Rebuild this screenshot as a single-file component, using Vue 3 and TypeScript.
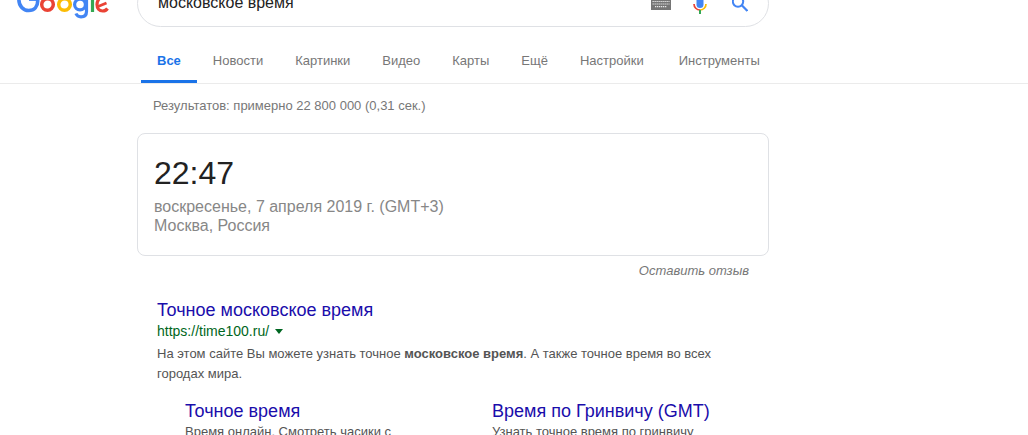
<script setup lang="ts">
const tabs: string[] = ['Новости', 'Картинки', 'Видео', 'Карты', 'Ещё']
const sitelinks = [
  { title: 'Точное время', text: 'Время онлайн. Смотреть часики с' },
  { title: 'Время по Гринвичу (GMT)', text: 'Узнать точное время по гринвичу' },
]
</script>

<template>
  <div class="page">
    <header class="head">
      <svg class="logo" width="92" height="20" viewBox="0 0 92 20" fill="none">
        <path d="M1.900 -2v2a9.800 10.500 0 0 0 9.800 10.500c5.800 0 9-4 9-9.500v-1" stroke="#4285f4" stroke-width="3.600" />
        <path d="M12 -.6h8" stroke="#4285f4" stroke-width="3" />
        <circle cx="30.500" cy="4.500" r="5.800" stroke="#ea4335" stroke-width="3.500" />
        <circle cx="47.500" cy="4.500" r="5.800" stroke="#fbbc05" stroke-width="3.500" />
        <circle cx="63" cy="4.500" r="5.400" stroke="#4285f4" stroke-width="3.200" />
        <path d="M69.500 -4V11.500c0 4-2.500 5.300-5.500 5.300-2.500 0-4.300-1.400-5.100-3.300" stroke="#4285f4" stroke-width="3.200" />
        <path d="M75.500 -4V12" stroke="#34a853" stroke-width="3.200" />
        <path d="M90.500 8.500c-1.200 1.700-3 2.500-4.800 2.500-3.500 0-5.700-2.800-5.700-6.500 0-4 2.500-7 5.500-7" stroke="#ea4335" stroke-width="3.200" />
        <path d="M80.500 6.800l9-3.800" stroke="#ea4335" stroke-width="2.800" />
      </svg>
      <div class="search">
        <span class="query">московское время</span>
        <svg class="kbd" width="20" height="12" viewBox="0 0 20 12">
          <rect width="20" height="12" fill="#757575" />
          <path d="M1.500 3.500h17M1.500 6h17M4 8.700h12" stroke="#e8e8e8" stroke-width="1.200" stroke-dasharray="1.300 .7" />
        </svg>
        <svg class="mic" width="14" height="16" viewBox="0 0 14 16" fill="none">
          <path d="M3.500 0h7v6.500a3.500 3.500 0 0 1-7 0z" fill="#4285f4" />
          <path d="M1 6a6 6 0 0 0 6 6" stroke="#ea4335" stroke-width="1.700" />
          <path d="M13 6a6 6 0 0 1-6 6" stroke="#fbbc05" stroke-width="1.700" />
          <path d="M7 12v4" stroke="#34a853" stroke-width="2" />
        </svg>
        <svg class="lens" width="16" height="16" viewBox="0 0 16 16" fill="none">
          <circle cx="6" cy="5.500" r="5.200" stroke="#4285f4" stroke-width="2" />
          <path d="M9.800 9.300l5.600 5.600" stroke="#4285f4" stroke-width="2.200" />
        </svg>
      </div>
    </header>

    <nav class="tabs">
      <a class="tab active">Все</a>
      <a v-for="t in tabs" :key="t" class="tab">{{ t }}</a>
      <a class="tab">Настройки</a>
      <a class="tab tab-tools">Инструменты</a>
    </nav>

    <main class="main">
      <div class="stats">Результатов: примерно 22 800 000 (0,31 сек.)</div>

      <section class="card">
        <div class="clock">22:47</div>
        <div class="info">воскресенье, 7 апреля 2019 г. (GMT+3)</div>
        <div class="info">Москва, Россия</div>
      </section>
      <div class="feedback">Оставить отзыв</div>

      <article class="result">
        <h3 class="title">Точное московское время</h3>
        <div class="url">https://time100.ru/<i class="caret"></i></div>
        <p class="snippet">На этом сайте Вы можете узнать точное <b>московское время</b>. А также точное время во всех городах мира.</p>
        <div class="links">
          <div v-for="l in sitelinks" :key="l.title" class="link">
            <h3 class="title">{{ l.title }}</h3>
            <div class="sub">{{ l.text }}</div>
          </div>
        </div>
      </article>
    </main>
  </div>
</template>

<style>
html, body { background: #fff; overflow: hidden; }
</style>

<style scoped>
.page {
  width: 1028px;
  height: 435px;
  overflow: hidden;
  background: #fff;
  font-family: "Liberation Sans", Arial, sans-serif;
}
.head {
  display: flex;
  align-items: flex-start;
  height: 27px;
  padding-left: 17px;
}
.logo { flex: none; }
.search {
  flex: none;
  box-sizing: border-box;
  width: 632px;
  height: 47px;
  margin: -20px 0 0 28px;
  padding: 0 20px 0 20px;
  display: flex;
  align-items: flex-end;
  border: 1px solid #dfe1e5;
  border-radius: 24px;
  background: #fff;
}
.query { flex: 1; font-size: 16px; line-height: 20px; margin-bottom: 13px; color: #222; }
.kbd { flex: none; margin-bottom: 16px; }
.mic { flex: none; margin: 0 0 12px 22px; }
.lens { flex: none; margin: 0 0 14px 25px; }

.tabs {
  display: flex;
  height: 57px;
  box-sizing: border-box;
  padding-left: 141px;
  border-bottom: 1px solid #ebebeb;
  font-size: 13px;
}
.tab {
  box-sizing: border-box;
  height: 56px;
  padding: 26px 16px 0;
  color: #777;
  white-space: nowrap;
}
.active {
  color: #1a73e8;
  font-weight: 700;
  border-bottom: 3px solid #1a73e8;
}
.tab-tools { margin-left: 3px; }

.main { padding-left: 137px; width: 632px; }
.stats {
  margin: 14px 0 0 16px;
  font-size: 13px;
  line-height: 16px;
  color: #777;
}
.card {
  box-sizing: border-box;
  height: 123px;
  margin-top: 19px;
  padding: 20px 16px 0;
  border: 1px solid #dfe1e5;
  border-radius: 8px;
}
.clock { font-size: 32px; line-height: 38px; color: #222; }
.info { font-size: 16px; line-height: 19px; color: #878787; }
.info:nth-child(2) { margin-top: 5px; }
.feedback {
  margin: 7px 20px 0 0;
  text-align: right;
  font-size: 13px;
  line-height: 15px;
  font-style: italic;
  color: #777;
}
.result { margin: 20px 0 0 20px; width: 575px; }
.title {
  margin: 0;
  font-size: 18px;
  font-weight: 400;
  line-height: 24px;
  color: #1a0dab;
}
.url {
  font-size: 14px;
  line-height: 18px;
  color: #006621;
}
.caret {
  display: inline-block;
  margin: 0 0 2px 6px;
  border: 4px solid transparent;
  border-top: 5px solid #006621;
  border-bottom: 0;
  vertical-align: middle;
}
.snippet {
  margin: 4px 0 0;
  font-size: 13px;
  line-height: 20px;
  color: #545454;
}
.links { display: flex; margin: 15px 0 0 28px; }
.link { flex: none; width: 307px; }
.sub { margin-top: 1px; font-size: 13px; line-height: 16px; color: #545454; }
</style>
